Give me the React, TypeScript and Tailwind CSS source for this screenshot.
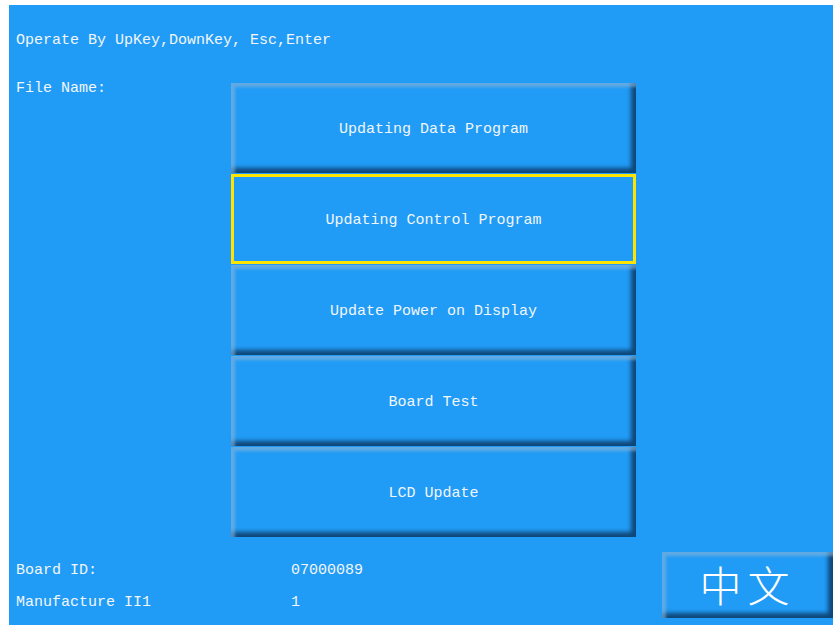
const items = [
  "Updating Data Program",
  "Updating Control Program",
  "Update Power on Display",
  "Board Test",
  "LCD Update",
];

const bevel =
  "shadow-[inset_6px_6px_3px_-2px_rgba(140,180,215,0.6),inset_-7px_-7px_4px_-2px_rgba(10,50,90,0.8)]";

export default function App() {
  const selected = 1;

  return (
    <div className="h-[625px] w-[833px] bg-white pl-[9px] pt-[5px]">
      <div className="flex h-full flex-col bg-[#219cf6] font-['Liberation_Mono',monospace] text-[15px] leading-[20px] text-[#f2f6fa]">
        <div className="pl-[7px] pt-[26px]">Operate By UpKey,DownKey, Esc,Enter</div>

        <div className="mt-[26px] flex">
          <div className="w-[222px] pl-[7px] pt-[2px]">File Name:</div>
          <div className="flex w-[405px] flex-col gap-[1px] pt-[6px]">
            {items.map((label, i) => (
              <div
                key={label}
                className={
                  i === selected
                    ? "flex h-[90px] items-center justify-center border-[3px] border-[#ffe400] px-2 pt-[3px]"
                    : `flex h-[90px] items-center justify-center pt-[4px] ${bevel}`
                }
              >
                {label}
              </div>
            ))}
          </div>
        </div>

        <div className="mt-[15px] flex items-start">
          <div className="flex flex-col gap-[12px] pl-[7px] pt-[9px]">
            <div className="flex">
              <span className="w-[275px]">Board ID:</span>
              <span>07000089</span>
            </div>
            <div className="flex">
              <span className="w-[275px]">Manufacture II1</span>
              <span>1</span>
            </div>
          </div>
          <div
            className={`ml-auto flex h-[66px] w-[171px] items-center justify-center pb-[2px] font-['Noto_Sans_CJK_SC',sans-serif] text-[42px] font-light leading-none tracking-[6px] text-white ${bevel}`}
          >
            中文
          </div>
        </div>
      </div>
    </div>
  );
}
